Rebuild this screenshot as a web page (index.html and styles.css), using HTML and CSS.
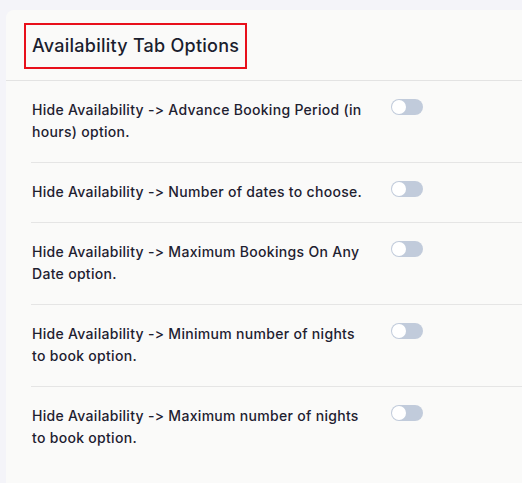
FILE: index.html
```html
<!DOCTYPE html>
<html>
<head>
<meta charset="utf-8">
<link rel="stylesheet" href="styles.css">
</head>
<body>
<div class="card">
  <div class="card-header">
    <h2 class="title">Availability Tab Options</h2>
  </div>
  <div class="options">
    <div class="option">
      <div class="label">Hide Availability -&gt; Advance Booking Period (in hours) option.</div>
      <span class="toggle"><span class="knob"></span></span>
    </div>
    <div class="option">
      <div class="label">Hide Availability -&gt; Number of dates to choose.</div>
      <span class="toggle"><span class="knob"></span></span>
    </div>
    <div class="option">
      <div class="label">Hide Availability -&gt; Maximum Bookings On Any Date option.</div>
      <span class="toggle"><span class="knob"></span></span>
    </div>
    <div class="option">
      <div class="label">Hide Availability -&gt; Minimum number of nights to book option.</div>
      <span class="toggle"><span class="knob"></span></span>
    </div>
    <div class="option last">
      <div class="label">Hide Availability -&gt; Maximum number of nights to book option.</div>
      <span class="toggle"><span class="knob"></span></span>
    </div>
  </div>
</div>
</body>
</html>
```
FILE: styles.css
```css
html, body {
  margin: 0;
  padding: 0;
  height: 100%;
  overflow: hidden;
}
body {
  background: #f4f4f9;
  font-family: Inter, "Noto Sans", "Liberation Sans", sans-serif;
  font-feature-settings: "calt" 0, "liga" 0;
  font-variant-ligatures: none;
  color: #1e2130;
}
.card {
  margin: 10px 0 0 6px;
  background: #fafaf9;
  border-top-left-radius: 8px;
  min-height: 480px;
}
.card-header {
  padding: 13px 0 11px 18px;
  border-bottom: 1px solid #e3e3e3;
}
.title {
  display: inline-block;
  margin: 0;
  padding: 8px 6px;
  border: 2px solid #e8101b;
  font-size: 18px;
  line-height: 26px;
  font-weight: 500;
  letter-spacing: 0.25px;
  color: #1b1e2e;
}
.options {
  margin-left: 25px;
}
.option {
  display: flex;
  align-items: flex-start;
  padding: 18px 0 19px;
  border-bottom: 1px solid #e5e5e5;
}
.option.last {
  border-bottom: none;
}
.label {
  flex: 0 0 335px;
  margin-right: 24px;
  padding-left: 1px;
  font-size: 14px;
  line-height: 22px;
  font-weight: 500;
  letter-spacing: 0.3px;
}
.toggle {
  position: relative;
  display: block;
  width: 32px;
  height: 16px;
  border-radius: 8px;
  background: #c1cbdb;
  flex: none;
}
.knob {
  position: absolute;
  left: 1px;
  top: 1px;
  width: 14px;
  height: 14px;
  border-radius: 50%;
  background: #ffffff;
}
```
